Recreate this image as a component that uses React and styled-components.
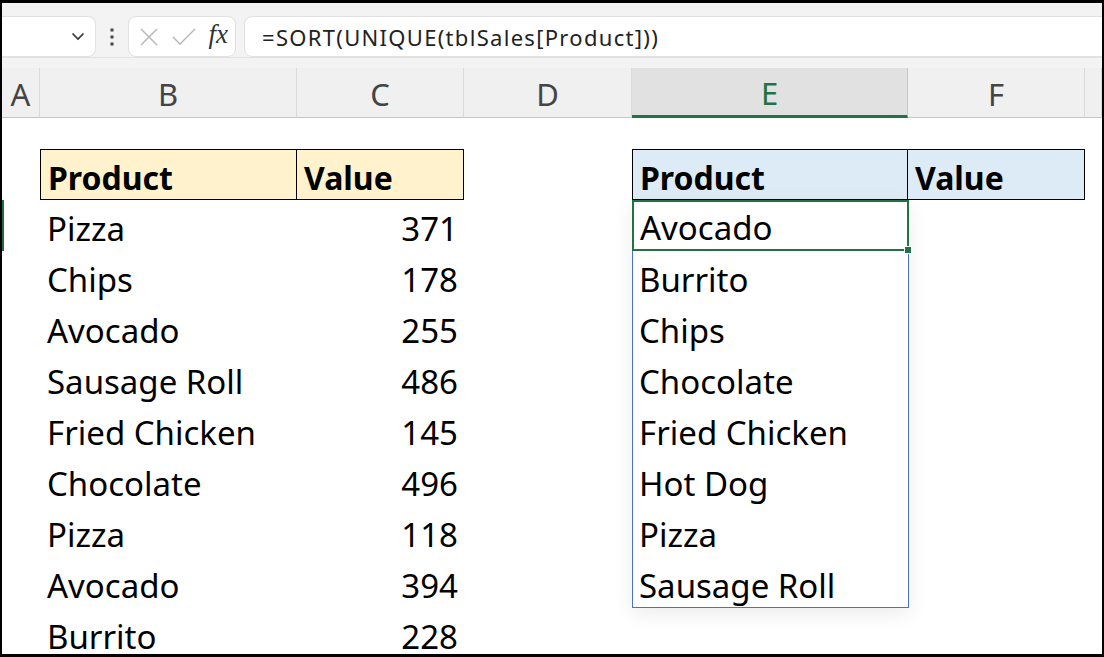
import React from 'react';
import styled, { createGlobalStyle } from 'styled-components';

const GlobalStyle = createGlobalStyle`
  html, body {
    margin: 0;
    padding: 0;
    background: #fff;
  }
`;

const COLS = '38px 257px 167px 168px 276px 177px 1fr';

// Outer frame with the black screenshot border
const Frame = styled.div`
  width: 1104px;
  height: 657px;
  box-sizing: border-box;
  border-style: solid;
  border-color: #000;
  border-width: 3px 2px 3px 2px;
  background: #fff;
  overflow: hidden;
  display: flex;
  flex-direction: column;
  font-family: 'Noto Sans', 'Open Sans', sans-serif;
`;

// Formula bar
const Toolbar = styled.div`
  flex: none;
  height: 55px;
  box-sizing: border-box;
  padding-top: 13px;
  display: flex;
  align-items: flex-start;
  background: #f3f3f3;
  border-bottom: 1px solid #e2e2e2;
`;

const Box = styled.div`
  height: 41px;
  box-sizing: border-box;
  background: #fff;
  border: 1px solid #e1e1e1;
  border-radius: 8px;
  display: flex;
  align-items: center;
`;

const NameBox = styled(Box)`
  width: 94px;
  border-left: none;
  border-radius: 0 8px 8px 0;
  justify-content: flex-end;
  padding-right: 10px;
`;

const Dots = styled.div`
  width: 32px;
  height: 41px;
  display: flex;
  align-items: center;
  justify-content: center;
`;

const FuncBox = styled(Box)`
  width: 108px;
  padding: 0 7px 0 10px;
  justify-content: space-between;
`;

const Fx = styled.span`
  font-family: 'Liberation Serif', 'DejaVu Serif', serif;
  font-style: italic;
  font-size: 27px;
  color: #333;
  margin-top: -5px;
`;

const FormulaBox = styled(Box)`
  flex: 1;
  margin-left: 8px;
  margin-right: -20px;
  padding-left: 17px;
  font-size: 22px;
  letter-spacing: 1.3px;
  color: #222;
`;

const Strip = styled.div`
  flex: none;
  height: 10px;
  background: #f3f3f3;
`;

// Column headers
const HeaderRow = styled.div`
  flex: none;
  display: grid;
  grid-template-columns: ${COLS};
  height: 50px;
`;

const ColHead = styled.div`
  box-sizing: border-box;
  display: flex;
  align-items: center;
  justify-content: center;
  padding-top: 3px;
  font-size: 31px;
  color: ${p => (p.$active ? '#217346' : '#444')};
  background: ${p => (p.$active ? '#e1e1e1' : '#f0f0f0')};
  border-right: 1px solid ${p => (p.$active ? '#c8c8c8' : '#dadada')};
  border-bottom: ${p => (p.$active ? '3px solid #217346' : '1px solid #c6c6c6')};
`;

// Sheet body
const Body = styled.div`
  flex: 1;
  min-height: 0;
  display: grid;
  grid-template-columns: ${COLS};
  grid-template-rows: 31px repeat(10, 51px);
`;

const RowMarker = styled.div`
  grid-column: 1;
  grid-row: 3;
  border-left: 3px solid #1d6b3f;
  margin-left: -1px;
`;

const Cell = styled.div`
  box-sizing: border-box;
  display: flex;
  align-items: center;
  padding: 5px 6px 0 7px;
  font-size: 33px;
  color: #000;
  white-space: nowrap;
  justify-content: ${p => (p.$num ? 'flex-end' : 'flex-start')};
`;

const HeadCell = styled(Cell)`
  font-weight: 700;
  font-size: 32px;
  background: ${p => p.$fill};
  border: 1px solid #000;
  border-left: ${p => (p.$first ? '1px solid #000' : 'none')};
`;

const Spill = styled.div`
  grid-column: 5;
  grid-row: 3 / span 8;
  box-sizing: border-box;
  border: 1px solid #4a74c0;
  border-top: none;
  box-shadow: 0 6px 18px rgba(0, 0, 0, 0.08);
  display: flex;
  flex-direction: column;
  margin-right: -1px;
`;

const SpillCell = styled(Cell)`
  height: 51px;
  flex: none;
  padding-left: 6px;
  position: relative;
  ${p =>
    p.$selected &&
    `
    border: 2px solid #217346;
    margin: 0 -1px 0 -1px;
    padding-left: 6px;
    padding-top: 3px;
  `}
`;

const Handle = styled.span`
  position: absolute;
  right: -5px;
  bottom: -5px;
  width: 6px;
  height: 6px;
  background: #217346;
  border: 1px solid #fff;
`;

const leftData = [
  ['Pizza', 371],
  ['Chips', 178],
  ['Avocado', 255],
  ['Sausage Roll', 486],
  ['Fried Chicken', 145],
  ['Chocolate', 496],
  ['Pizza', 118],
  ['Avocado', 394],
  ['Burrito', 228],
];

const unique = ['Avocado', 'Burrito', 'Chips', 'Chocolate', 'Fried Chicken', 'Hot Dog', 'Pizza', 'Sausage Roll'];

const columns = ['A', 'B', 'C', 'D', 'E', 'F', ''];

export default function App() {
  return (
    <>
      <GlobalStyle />
      <Frame>
        <Toolbar>
          <NameBox>
            <svg width="14" height="9" viewBox="0 0 14 9">
              <polyline points="1.5,1.5 7,7 12.5,1.5" fill="none" stroke="#333" strokeWidth="1.6" />
            </svg>
          </NameBox>
          <Dots>
            <svg width="4" height="18" viewBox="0 0 4 18">
              <rect x="0.5" y="0.5" width="3" height="3" fill="#444" />
              <rect x="0.5" y="7.5" width="3" height="3" fill="#444" />
              <rect x="0.5" y="14.5" width="3" height="3" fill="#444" />
            </svg>
          </Dots>
          <FuncBox>
            <svg width="20" height="20" viewBox="0 0 20 20">
              <path d="M2 2 L18 18 M18 2 L2 18" stroke="#b4b4b4" strokeWidth="1.4" />
            </svg>
            <svg width="24" height="18" viewBox="0 0 24 18">
              <polyline points="1,9 8,16 23,1" fill="none" stroke="#b4b4b4" strokeWidth="1.4" />
            </svg>
            <Fx>fx</Fx>
          </FuncBox>
          <FormulaBox>=SORT(UNIQUE(tblSales[Product]))</FormulaBox>
        </Toolbar>
        <Strip />
        <HeaderRow>
          {columns.map((c, i) => (
            <ColHead key={i} $active={c === 'E'}>{c}</ColHead>
          ))}
        </HeaderRow>
        <Body>
          <RowMarker />
          <HeadCell style={{ gridColumn: 2, gridRow: 2 }} $fill="#fff2cc" $first>Product</HeadCell>
          <HeadCell style={{ gridColumn: 3, gridRow: 2 }} $fill="#fff2cc">Value</HeadCell>
          {leftData.map(([name, val], i) => (
            <React.Fragment key={i}>
              <Cell style={{ gridColumn: 2, gridRow: i + 3 }}>{name}</Cell>
              <Cell style={{ gridColumn: 3, gridRow: i + 3 }} $num>{val}</Cell>
            </React.Fragment>
          ))}
          <HeadCell style={{ gridColumn: 5, gridRow: 2 }} $fill="#ddebf7" $first>Product</HeadCell>
          <HeadCell style={{ gridColumn: 6, gridRow: 2 }} $fill="#ddebf7">Value</HeadCell>
          <Spill>
            {unique.map((name, i) => (
              <SpillCell key={name} $selected={i === 0}>
                {name}
                {i === 0 && <Handle />}
              </SpillCell>
            ))}
          </Spill>
        </Body>
      </Frame>
    </>
  );
}
